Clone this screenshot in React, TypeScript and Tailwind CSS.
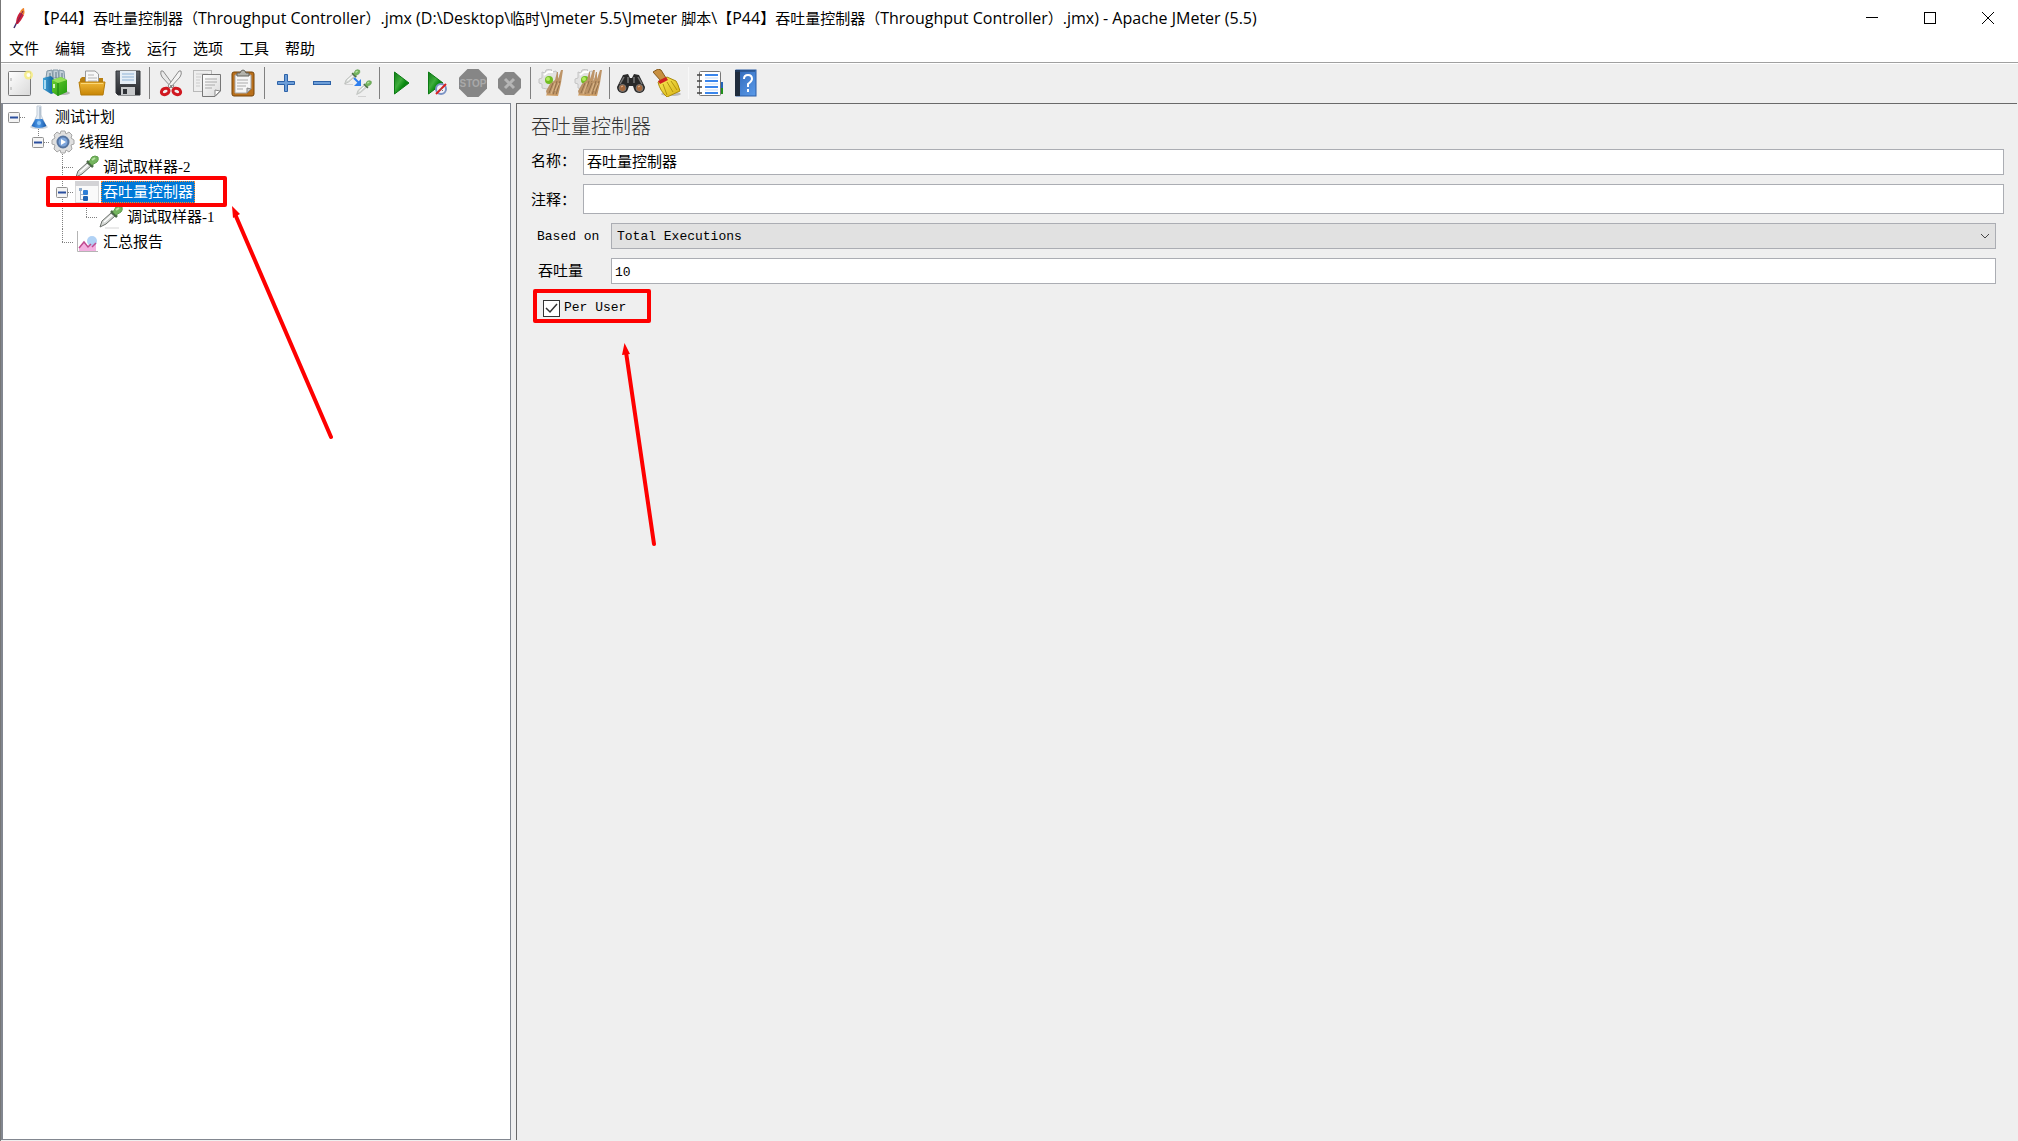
import React, { useState } from 'react';

type IconProps = { children: React.ReactNode };

const ToolIcon: React.FC<IconProps> = ({ children }) => (
  <svg width="28" height="28" viewBox="0 0 28 28" fill="none" aria-hidden="true">
    {children}
  </svg>
);

// Gradients shared by the toolbar and tree icons
const Gradients: React.FC = () => (
  <svg width="0" height="0" className="absolute" aria-hidden="true">
    <defs>
      <linearGradient id="paper" x1="0" y1="0" x2="1" y2="1">
        <stop offset="0" stopColor="#ffffff" />
        <stop offset="1" stopColor="#d9d9d9" />
      </linearGradient>
      <linearGradient id="blueBox" x1="0" y1="0" x2="1" y2="0">
        <stop offset="0" stopColor="#46a5d8" />
        <stop offset="1" stopColor="#0f5f9c" />
      </linearGradient>
      <linearGradient id="greenBox" x1="0" y1="0" x2="1" y2="1">
        <stop offset="0" stopColor="#6fd032" />
        <stop offset="1" stopColor="#1f9a10" />
      </linearGradient>
      <linearGradient id="folder" x1="0" y1="0" x2="0" y2="1">
        <stop offset="0" stopColor="#f0b838" />
        <stop offset="1" stopColor="#c78505" />
      </linearGradient>
      <linearGradient id="disk" x1="0" y1="0" x2="0" y2="1">
        <stop offset="0" stopColor="#5c6066" />
        <stop offset="1" stopColor="#25272b" />
      </linearGradient>
      <linearGradient id="play" x1="0" y1="0" x2="1" y2="1">
        <stop offset="0" stopColor="#0f7a16" />
        <stop offset="0.4" stopColor="#3fae3c" />
        <stop offset="0.6" stopColor="#0a8a10" />
        <stop offset="1" stopColor="#05680a" />
      </linearGradient>
      <linearGradient id="broomYellow" x1="0" y1="0" x2="1" y2="1">
        <stop offset="0" stopColor="#f9ec5a" />
        <stop offset="1" stopColor="#d9b010" />
      </linearGradient>
      <linearGradient id="straw" x1="0" y1="0" x2="1" y2="1">
        <stop offset="0" stopColor="#b08d68" />
        <stop offset="1" stopColor="#c89a66" />
      </linearGradient>
      <linearGradient id="book" x1="0" y1="0" x2="1" y2="1">
        <stop offset="0" stopColor="#2f67b8" />
        <stop offset="1" stopColor="#5b9bea" />
      </linearGradient>
      <linearGradient id="flask" x1="0" y1="0" x2="1" y2="0">
        <stop offset="0" stopColor="#1b62b8" />
        <stop offset="0.5" stopColor="#4f9ae8" />
        <stop offset="1" stopColor="#1556a6" />
      </linearGradient>
    </defs>
  </svg>
);

const Pipette: React.FC<{ tone: string }> = ({ tone }) => (
  <g>
    <path d="M1 22 L3 16 L12 8 L16 11 L7 19 Z" fill="#d6d9d6" stroke={tone} />
    <path d="M5 17 L13 10" stroke="#fff" strokeWidth="1.5" />
    <path d="M12 6 L18 12" stroke="#4a6b45" strokeWidth="2.5" />
    <path d="M14 7 L17 2 Q20 0 23 2 Q24 5 22 7 L17 10 Z" fill="#74b45e" stroke="#5f9e4c" />
    <path d="M17 5 L20 3" stroke="#b8e2a4" strokeWidth="2" />
  </g>
);

const Bristles: React.FC = () => (
  <g>
    <path d="M23 1 L25 1 L23 14 L20 27 L9 26 L8 22 L12 15 L17 11 L19 3 L20 3 L20 10 Z" fill="url(#straw)" />
    <path d="M15 14 L11 24 M19 12 L15 26 M22 12 L18 26" stroke="#92704a" />
    <path d="M17 14 L13 25 M21 14 L17 22" stroke="#dcb98c" />
    <path d="M8 26 H20" stroke="#d8a566" />
  </g>
);

const SmallGear: React.FC = () => (
  <g>
    <path
      d="M4 3 L7 4 L8 1 L13 0 L14 3 L18 2 L20 6 L18 9 L21 10 V14 L18 15 V19 L14 20 L12 18 L9 20 L4 19 V15 L1 14 L1 10 L4 9 Z"
      fill="#e2e2e2"
      stroke="#c4c4c4"
    />
    <path d="M6 6 L10 3 H15" stroke="#fff" strokeWidth="2" />
    <circle cx="11" cy="11" r="4" fill="#72bd22" />
    <circle cx="10" cy="10" r="2" fill="#b3ea62" />
  </g>
);

const icons: Record<string, React.ReactNode> = {
  new: (
    <ToolIcon>
      <rect x="2.5" y="2.5" width="22" height="24" rx="1" fill="url(#paper)" stroke="#777" />
      <path d="M5 9v3M5 18v3" stroke="#aaa" />
      <circle cx="22.5" cy="6" r="4.5" fill="#f8ee78" opacity="0.8" />
      <circle cx="22.5" cy="6" r="2" fill="#fffef0" />
    </ToolIcon>
  ),
  templates: (
    <ToolIcon>
      <path d="M5 2 L10 1 L11 9 L4 9 Z M11 1 L16 1 L17 9 L11 9 Z M17 1 L22 2 L23 12 L17 10 Z" fill="#c3d0d8" stroke="#8197a5" />
      <path d="M8 4v5M14 3v6M20 4v6" stroke="#5d7687" />
      <ellipse cx="20" cy="24" rx="8" ry="2" fill="#b5b5b5" />
      <path d="M1 9 L9 7 L12 10 L12 24 L9 25 L1 20 Z" fill="url(#blueBox)" />
      <path d="M3 11v9" stroke="#a9dcf3" strokeWidth="2" />
      <path d="M10 11 L19 8 L25 11 L25 23 L16 27 L10 23 Z" fill="url(#greenBox)" />
      <path d="M10 11 L16 14 L25 11 L19 8 Z" fill="#94e058" />
      <path d="M16 14 V27" stroke="#157a0c" />
      <path d="M12 15 v4" stroke="#d5f7bd" strokeWidth="2" />
    </ToolIcon>
  ),
  open: (
    <ToolIcon>
      <path d="M2 10 L4 8 H12 L14 9 H25 V18 H2 Z" fill="#b97f10" />
      <path d="M7.500 2 H17 L20.500 5 V16 H7.500 Z" fill="#f7f7f7" stroke="#999" />
      <path d="M10 6h6M10 9h9M10 12h9" stroke="#b5b5b5" />
      <path d="M1 13 H27 L25 26 H3 Z" fill="url(#folder)" stroke="#b57b08" />
      <path d="M3 14.5 H25" stroke="#fbd878" />
    </ToolIcon>
  ),
  save: (
    <ToolIcon>
      <path d="M2 2 H26 V26 H4 L2 24 Z" fill="url(#disk)" stroke="#33363a" />
      <rect x="6" y="2" width="16" height="13" fill="#e6eef6" />
      <path d="M8 5h12M8 8h12M8 11h12" stroke="#8fb3d6" />
      <rect x="7" y="18" width="14" height="8" fill="#c6c8ca" />
      <rect x="9" y="20" width="4" height="5" fill="#303338" />
    </ToolIcon>
  ),
  cut: (
    <ToolIcon>
      <path d="M4 2 Q3 5 5 8 L15 19 L17 17 L6 2 Z" fill="#e9e9e9" stroke="#8b8b8b" />
      <path d="M24 2 Q25 5 23 8 L13 19 L11 17 L22 2 Z" fill="#f3f3f3" stroke="#8b8b8b" />
      <ellipse cx="8" cy="22.5" rx="4" ry="3" stroke="#d01820" strokeWidth="3" transform="rotate(-25 8 22)" />
      <ellipse cx="20" cy="22.5" rx="4" ry="3" stroke="#d01820" strokeWidth="3" transform="rotate(25 20 22)" />
      <circle cx="14" cy="17" r="1" fill="#777" />
    </ToolIcon>
  ),
  copy: (
    <ToolIcon>
      <rect x="0.5" y="1.5" width="18" height="21" fill="#eee" stroke="#b9b9b9" />
      <path d="M3 5h12M3 8h5M3 11h4M3 14h4M3 17h4" stroke="#ccc" />
      <path d="M9.5 5.5 H27.5 V22 L22 27.5 H9.5 Z" fill="url(#paper)" stroke="#777" />
      <path d="M12 10h12M12 13h12M12 16h10M12 19h7" stroke="#aaa" />
      <path d="M27 22 L22 21 L22 27 Z" fill="#fff" stroke="#888" />
    </ToolIcon>
  ),
  paste: (
    <ToolIcon>
      <rect x="3" y="3" width="22" height="24" rx="2" fill="#b9701c" stroke="#764509" />
      <path d="M6 6 H22 V20 L18 24 H6 Z" fill="#f6f6f6" stroke="#a9a9a9" />
      <path d="M8 11h11M8 14h11M8 17h9M8 20h6" stroke="#aaa" />
      <path d="M22 20 L18 19 L18 24 Z" fill="#ccc" stroke="#888" />
      <path d="M8 7 V4 H11 Q12 1 14 1 Q16 1 17 4 H20 V7 Z" fill="#b3b3ac" stroke="#63635d" />
    </ToolIcon>
  ),
  plus: (
    <ToolIcon>
      <path d="M12.500 5.500 H15.500 V12.500 H22.500 V15.500 H15.500 V22.500 H12.500 V15.500 H5.500 V12.500 H12.500 Z" fill="#6d9ed8" stroke="#2d62a8" />
    </ToolIcon>
  ),
  minus: (
    <ToolIcon>
      <rect x="5.5" y="12.5" width="17" height="3" fill="#6d9ed8" stroke="#2d62a8" />
    </ToolIcon>
  ),
  toggle: (
    <ToolIcon>
      <g transform="scale(0.68)">
        <Pipette tone="#b2b5b2" />
      </g>
      <g transform="translate(12 11) scale(0.66)">
        <Pipette tone="#b2b5b2" />
      </g>
      <path d="M1 15.5 H9 M14 27.5 H22" stroke="#d2d2d2" />
      <path d="M10 9 L15 14" stroke="#2f7fee" strokeWidth="2" />
      <path d="M17 10 V17 H10 Z" fill="#2f7fee" />
    </ToolIcon>
  ),
  start: (
    <ToolIcon>
      <path d="M7.500 3 L22 14 L7.500 25 Z" fill="url(#play)" stroke="#0c7a14" />
    </ToolIcon>
  ),
  startNoPause: (
    <ToolIcon>
      <path d="M5.500 3 L20 14 L5.500 25 Z" fill="url(#play)" stroke="#0c7a14" />
      <circle cx="18" cy="20" r="5" fill="#f2f2f8" stroke="#7b93c4" strokeWidth="2" />
      <path d="M13 25 L23 15" stroke="#d92020" strokeWidth="2" />
      <path d="M17 19 l3 3" stroke="#777" />
    </ToolIcon>
  ),
  stop: (
    <ToolIcon>
      <path d="M8.5 0 H19.5 L28 8.5 V19.5 L19.5 28 H8.5 L0 19.5 V8.5 Z" fill="#868686" />
      <text x="14" y="18" textAnchor="middle" fontSize="10" fontWeight="700" fontFamily="Liberation Sans, sans-serif" fill="#a9a9a9">
        STOP
      </text>
    </ToolIcon>
  ),
  shutdown: (
    <ToolIcon>
      <path d="M10 3 H19 L26 10 V19 L19 26 H10 L3 19 V10 Z" fill="#868686" />
      <path d="M10 10 L19 19 M19 10 L10 19" stroke="#b5b5b5" strokeWidth="3" />
    </ToolIcon>
  ),
  clear: (
    <ToolIcon>
      <SmallGear />
      <Bristles />
    </ToolIcon>
  ),
  clearAll: (
    <ToolIcon>
      <SmallGear />
      <g transform="translate(-4 0)">
        <Bristles />
      </g>
      <g transform="translate(3 0)">
        <Bristles />
      </g>
    </ToolIcon>
  ),
  search: (
    <ToolIcon>
      <path d="M6 6 L11 5 L13 9 H15 L17 5 L22 6 L28 18 Q28 23 23 24 Q18 24 17 20 L16 17 H12 L11 20 Q10 24 5 24 Q0 23 0 18 Z" fill="#292929" />
      <path d="M7 8 L3 15 M21 8 L25 15 M11 8v6M17 8v6" stroke="#777" strokeWidth="1.5" />
      <circle cx="5.5" cy="19" r="3.5" fill="#a4683c" stroke="#777" />
      <circle cx="22.5" cy="19" r="3.5" fill="#a4683c" stroke="#777" />
      <path d="M4 18l2-1M21 18l2-1" stroke="#e5b48c" />
    </ToolIcon>
  ),
  searchReset: (
    <ToolIcon>
      <ellipse cx="18" cy="25" rx="10" ry="2" fill="#bbb" />
      <path d="M0 3 L5 0 L8 1 L13 9 L8 12 Z" fill="#c89040" stroke="#85591c" />
      <path d="M5 13 L14 8 L23 12 Q25 15 27 22 L14 28 Q7 22 5 13 Z" fill="url(#broomYellow)" stroke="#a98a0a" />
      <path d="M10 15 L14 26 M14 13 L20 23 M18 12 L24 21" stroke="#b29310" />
      <path d="M5 12 L13 8 L15 11 L7 15 Z" fill="#cf2020" />
    </ToolIcon>
  ),
  functions: (
    <ToolIcon>
      <rect x="21" y="13" width="6" height="6" fill="#2264b8" />
      <rect x="21" y="19" width="6" height="6" fill="#21901a" />
      <rect x="3.5" y="2.5" width="21" height="24" rx="1" fill="#fff" stroke="#777" />
      <path d="M1 6h5M1 12h5M1 18h5M1 24h5" stroke="#444" strokeWidth="1.5" />
      <path d="M9 6h13M9 12h13M9 18h13M9 24h13" stroke="#3a86ec" strokeWidth="2" />
      <path d="M9 9h13M9 15h13M9 21h13" stroke="#c7dcf7" />
    </ToolIcon>
  ),
  help: (
    <ToolIcon>
      <rect x="4" y="1" width="20" height="26" fill="url(#book)" stroke="#2a5ca6" />
      <rect x="3" y="1" width="5" height="26" fill="#202c3c" />
      <path d="M3 2h20" stroke="#1f4270" />
      <path d="M12 10 Q12 6 16 6 Q20 6 20 10 Q20 12 16 15 V18" stroke="#fff" strokeWidth="2" />
      <rect x="15" y="20" width="2" height="3" fill="#fff" />
    </ToolIcon>
  ),
};

const toolGroups: { divider: boolean; items: [string, string][] }[] = [
  { divider: true, items: [['new', '新建'], ['templates', '模板'], ['open', '打开'], ['save', '保存']] },
  { divider: true, items: [['cut', '剪切'], ['copy', '复制'], ['paste', '粘贴']] },
  { divider: true, items: [['plus', '全部展开'], ['minus', '全部折叠'], ['toggle', '切换']] },
  { divider: true, items: [['start', '启动'], ['startNoPause', '不停顿开始'], ['stop', '停止'], ['shutdown', '关闭']] },
  { divider: true, items: [['clear', '清除'], ['clearAll', '清除全部']] },
  { divider: false, items: [['search', '查找'], ['searchReset', '重置搜索']] },
  { divider: false, items: [['functions', '函数助手'], ['help', '帮助']] },
];

const treeIcons: Record<string, React.ReactNode> = {
  plan: (
    <g>
      <ellipse cx="12" cy="22" rx="9" ry="2" fill="#cfd6de" />
      <path d="M10 1 L14 1 L14 10 L19 21 H5 L10 10 Z" fill="#e6edf4" stroke="#c3ced9" />
      <path d="M8.5 14 H15.5 L19.5 21 Q12 25 4.5 21 Z" fill="url(#flask)" />
      <path d="M13 2 V14" stroke="#93a5b8" />
      <circle cx="12" cy="18" r="2" fill="#8cc4f6" />
    </g>
  ),
  threads: (
    <g>
      <path
        d="M10 1 H14 L15 4 L18 2 L21 5 L20 8 L23 10 V14 L20 15 L21 19 L18 22 L15 20 L14 23 H10 L9 20 L6 22 L3 19 L4 15 L1 14 V10 L4 8 L3 5 L6 2 L9 4 Z"
        fill="#e0e0e0"
        stroke="#a6a6a6"
      />
      <circle cx="12" cy="12" r="5.5" fill="#7ea6dc" stroke="#56749f" strokeWidth="2" />
      <path d="M10 9 L15 12 L10 15 Z" fill="#fff" />
    </g>
  ),
  sampler: (
    <g>
      <path d="M6 23h14" stroke="#d5d5d5" />
      <Pipette tone="#6b706b" />
    </g>
  ),
  controller: (
    <g>
      <rect x="0.5" y="1.5" width="23" height="21" fill="#fafafa" stroke="#d9d9d9" />
      <rect x="0" y="1" width="24" height="5" fill="#d3d3d6" />
      <path d="M5.500 9 V20 M5 14.500 H9 M5 19.500 H9" stroke="#a3b1c4" />
      <rect x="4" y="8" width="3" height="3" fill="#8ea9c9" />
      <rect x="8" y="10" width="5" height="5" rx="1" fill="#2f7fd6" />
      <rect x="8" y="16" width="5" height="5" rx="1" fill="#1e63b4" />
    </g>
  ),
  report: (
    <g>
      <path d="M2.5 1 V21.5 H23" stroke="#b4b4b4" />
      <path d="M4 18 L9 12 L13 16 L21 11 V21 H4 Z" fill="#f2b0e0" />
      <circle cx="17" cy="11" r="5" fill="#a9cdf4" opacity="0.9" />
      <path d="M4 18 L9 12 L13 17 L16 14 M17 17 L21 13" stroke="#c04a90" strokeWidth="1.5" />
    </g>
  ),
};

type Guide = 'blank' | 'full' | 'end' | 'tee' | 'box-root' | 'box-end' | 'box-tee';

interface TreeNode {
  label: string;
  icon: string;
  guides: Guide[];
}

const treeNodes: TreeNode[] = [
  { label: '测试计划', icon: 'plan', guides: ['box-root'] },
  { label: '线程组', icon: 'threads', guides: ['blank', 'box-end'] },
  { label: '调试取样器-2', icon: 'sampler', guides: ['blank', 'blank', 'tee'] },
  { label: '吞吐量控制器', icon: 'controller', guides: ['blank', 'blank', 'box-tee'] },
  { label: '调试取样器-1', icon: 'sampler', guides: ['blank', 'blank', 'full', 'end'] },
  { label: '汇总报告', icon: 'report', guides: ['blank', 'blank', 'end'] },
];

const GuideCell: React.FC<{ kind: Guide }> = ({ kind }) => {
  const up = !['blank', 'box-root'].includes(kind);
  const down = ['full', 'tee', 'box-tee'].includes(kind);
  const across = !['blank', 'full'].includes(kind);
  return (
    <svg width="24" height="25" viewBox="0 0 24 25" fill="none" className="shrink-0" aria-hidden="true">
      <g stroke="#808080" strokeDasharray="1 1">
        {up && <path d="M11.5 0 V13" />}
        {down && <path d="M11.5 14 V25" />}
        {across && <path d="M11 13.5 H22" />}
      </g>
      {kind.startsWith('box') && (
        <g>
          <rect x="5.5" y="8.5" width="11" height="10" rx="1" fill="#f4f4f4" stroke="#919191" />
          <path d="M7 13.5 H15" stroke="#2b4f9e" strokeWidth="2" />
        </g>
      )}
    </svg>
  );
};

const menus = ['文件', '编辑', '查找', '运行', '选项', '工具', '帮助'];

// Latin runs are set one size up from the Chinese ones
const titleParts = [
  { text: '【' },
  { text: 'P44', latin: true },
  { text: '】吞吐量控制器（' },
  { text: 'Throughput Controller', latin: true },
  { text: '）' },
  { text: '.jmx (D:\\Desktop\\', latin: true },
  { text: '临时' },
  { text: '\\Jmeter 5.5\\Jmeter ', latin: true },
  { text: '脚本' },
  { text: '\\', latin: true },
  { text: '【' },
  { text: 'P44', latin: true },
  { text: '】吞吐量控制器（' },
  { text: 'Throughput Controller', latin: true },
  { text: '）' },
  { text: '.jmx) - Apache JMeter (5.5)', latin: true },
];

const TitleBar: React.FC = () => (
  <header className="flex h-9 items-center pr-px pb-px">
    <svg width="14" height="22" viewBox="0 0 14 22" className="ml-3 shrink-0" aria-hidden="true">
      <path d="M1 21 L4 15" stroke="#47306b" strokeWidth="1.5" />
      <path d="M3 17 Q3 10 7 5 L11 8 Q8 14 5 17 Z" fill="#c9203c" />
      <path d="M7 5 Q9 1 11 1 Q12 5 11 8 Z" fill="#ee8228" />
      <path d="M4 16 L10 4" stroke="#7d1c50" />
    </svg>
    <h1 className="ml-2 flex-1 truncate text-[15px]">
      {titleParts.map((part, i) => (
        <span key={i} className={part.latin ? 'text-base' : ''}>
          {part.text}
        </span>
      ))}
    </h1>
    <button aria-label="最小化" className="grid h-9 w-[58px] place-items-center">
      <svg width="12" height="12" viewBox="0 0 12 12" stroke="#000">
        <path d="M0 5.5 H12" />
      </svg>
    </button>
    <button aria-label="最大化" className="grid h-9 w-[58px] place-items-center">
      <svg width="12" height="12" viewBox="0 0 12 12" stroke="#000" fill="none">
        <rect x="0.5" y="0.5" width="11" height="11" />
      </svg>
    </button>
    <button aria-label="关闭" className="grid h-9 w-[58px] place-items-center">
      <svg width="12" height="12" viewBox="0 0 12 12" stroke="#000">
        <path d="M0 0 L12 12 M12 0 L0 12" />
      </svg>
    </button>
  </header>
);

const Toolbar: React.FC = () => (
  <div className="flex h-10 items-center border-t border-white bg-[#efefef] pb-[2px] pl-px">
    {toolGroups.map((group, i) => (
      <React.Fragment key={i}>
        {group.items.map(([icon, label]) => (
          <button key={icon} aria-label={label} className="grid size-9 shrink-0 place-items-center">
            {icons[icon]}
          </button>
        ))}
        {i < toolGroups.length - 1 && (
          <div className="flex w-[7px] shrink-0 justify-center">
            <div className={`h-8 w-px ${group.divider ? 'bg-[#808080]' : 'bg-[#f8f8f8]'}`}></div>
          </div>
        )}
      </React.Fragment>
    ))}
  </div>
);

// Red marks drawn on top of the window
const Annotations: React.FC = () => (
  <svg width="700" height="600" viewBox="0 0 700 600" fill="none" className="pointer-events-none absolute top-0 left-0" aria-hidden="true">
    <g stroke="#fe0000" strokeWidth="4" strokeLinecap="round" strokeLinejoin="round">
      <rect x="47" y="178" width="177" height="27" />
      <rect x="534" y="291" width="114" height="30" />
      <path d="M234 214 L330 437" />
      <path d="M625 352 L653 544" />
    </g>
    <path d="M231 206 L239 214 L232 218 Z M623.5 343 L629 354 L621 355 Z" fill="#fe0000" />
  </svg>
);

export default function App() {
  const [selected, setSelected] = useState('吞吐量控制器');
  const [name, setName] = useState('吞吐量控制器');
  const [comment, setComment] = useState('');
  const [throughput, setThroughput] = useState('10');
  const [perUser, setPerUser] = useState(true);

  return (
    <div className="relative flex h-screen flex-col overflow-hidden border-l border-[#777] bg-white font-['Open_Sans','Noto_Sans_CJK_SC',sans-serif] text-black">
      <Gradients />
      <TitleBar />

      <nav className="flex h-[27px] items-center gap-4 border-b border-[#a0a0a0] pb-[2px] pl-2">
        {menus.map((menu) => (
          <button key={menu} className="text-[15px] leading-5">
            {menu}
          </button>
        ))}
      </nav>

      <Toolbar />

      <main className="flex min-h-0 flex-1 gap-[5px] bg-[#efefef] pr-px font-['Liberation_Serif','Noto_Sans_CJK_SC',serif]">
        {/* Test plan tree */}
        <aside className="mb-px w-[510px] shrink-0 border border-l-2 border-[#828790] bg-white">
          <ul>
            {treeNodes.map((node) => (
              <li key={node.label} className="flex h-[25px] items-center">
                {node.guides.map((kind, i) => (
                  <GuideCell key={i} kind={kind} />
                ))}
                <svg width="24" height="24" viewBox="0 0 24 24" fill="none" className="shrink-0" aria-hidden="true">
                  {treeIcons[node.icon]}
                </svg>
                <button
                  onClick={() => setSelected(node.label)}
                  className={`ml-[2px] h-[22px] border border-dotted px-px text-[15px] leading-5 ${
                    selected === node.label
                      ? 'border-[#ff8728] bg-[#0078d7] text-white'
                      : 'border-transparent'
                  }`}
                >
                  {node.label}
                </button>
              </li>
            ))}
          </ul>
        </aside>

        {/* Throughput controller settings */}
        <section className="mb-px min-w-0 flex-1 border-t border-l border-[#696969] pr-[13px] pl-[14px]">
          <h2 className="flex h-[45px] items-center text-xl font-light text-[#333]">吞吐量控制器</h2>

          <div className="flex flex-col gap-[9px]">
            <div className="flex items-center">
              <label htmlFor="name" className="w-[52px] shrink-0 pb-[2px] text-[15px] leading-5">名称：</label>
              <input
                id="name"
                value={name}
                onChange={(e) => setName(e.target.value)}
                className="h-[26px] min-w-0 flex-1 border border-[#abadb3] bg-white px-[3px] pb-[3px] text-[15px] outline-none"
              />
            </div>
            <div className="flex items-center">
              <label htmlFor="comment" className="w-[52px] shrink-0 pt-[2px] text-[15px] leading-5">注释：</label>
              <input
                id="comment"
                value={comment}
                onChange={(e) => setComment(e.target.value)}
                className="h-[30px] min-w-0 flex-1 border border-[#abadb3] bg-white px-[3px] pb-[3px] text-[15px] outline-none"
              />
            </div>

            <div className="flex items-center pr-2 pl-[6px]">
              <label htmlFor="mode" className="w-[74px] shrink-0 pt-[2px] font-['Liberation_Mono',monospace] text-[13px]">Based on</label>
              <div className="relative min-w-0 flex-1">
                <select
                  id="mode"
                  defaultValue="total"
                  className="block h-[26px] w-full appearance-none border border-[#abadb3] bg-[#e1e1e1] px-[5px] pt-[2px] font-['Liberation_Mono',monospace] text-[13px] outline-none"
                >
                  <option value="total">Total Executions</option>
                  <option value="percent">Percent Executions</option>
                </select>
                <svg width="10" height="6" viewBox="0 0 10 6" fill="none" className="pointer-events-none absolute top-[10px] right-[6px]" aria-hidden="true">
                  <path d="M1 1 L5 5 L9 1" stroke="#444" />
                </svg>
              </div>
            </div>

            <div className="flex items-center pr-2 pl-[6px]">
              <label htmlFor="throughput" className="w-[74px] shrink-0 pl-px text-[15px] leading-5">吞吐量</label>
              <input
                id="throughput"
                value={throughput}
                onChange={(e) => setThroughput(e.target.value)}
                className="h-[26px] min-w-0 flex-1 border border-[#abadb3] bg-white px-[3px] pt-[2px] font-['Liberation_Mono',monospace] text-[13px] outline-none"
              />
            </div>

            <label className="flex h-[30px] items-center gap-1 self-start pl-3 font-['Liberation_Mono',monospace] text-[13px]">
              <span className="relative block size-[17px]">
                <input
                  type="checkbox"
                  checked={perUser}
                  onChange={(e) => setPerUser(e.target.checked)}
                  className="block size-[17px] appearance-none border border-[#333] bg-white"
                />
                {perUser && (
                  <svg width="17" height="17" viewBox="0 0 17 17" fill="none" className="pointer-events-none absolute inset-0" aria-hidden="true">
                    <path d="M3 8 L7 12 L14 4" stroke="#333" strokeWidth="1.5" />
                  </svg>
                )}
              </span>
              Per User
            </label>
          </div>
        </section>
      </main>

      <Annotations />
    </div>
  );
}
